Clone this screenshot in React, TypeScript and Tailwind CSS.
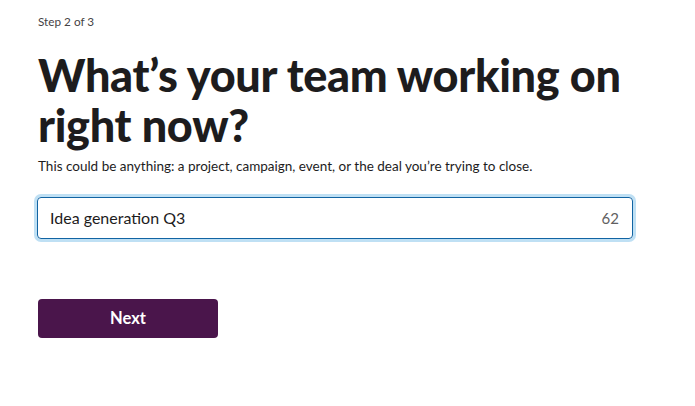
export default function App() {
  return (
    <div className="min-h-[406px] bg-white px-[38px] pt-[14px] text-[#1d1c1d]" style={{ fontFamily: "Lato, 'Noto Sans', sans-serif" }}>
      <div className="text-[11.75px] leading-[15px] text-[#454245]">Step 2 of 3</div>
      <h1 className="mt-[21px] w-[600px] text-[45px] font-black leading-[50px] tracking-[-0.3px]">What’s your team working on right now?</h1>
      <p className="mt-[7px] text-[13.5px] leading-[18px]">This could be anything: a project, campaign, event, or the deal you’re trying to close.</p>
      <div className="mt-[22px] -ml-px flex h-[42px] w-[596px] items-center justify-between rounded-[4px] border border-[#1264a3] pl-[12px] pr-[13px] text-[16px] shadow-[0_0_0_3px_#bfe0f4]">
        <span>Idea generation Q3</span>
        <span className="text-[15px] text-[#616061]">62</span>
      </div>
      <button className="mt-[60px] flex h-[39px] w-[180px] items-center justify-center rounded-[4px] bg-[#4a154b] text-[16.5px] font-bold text-white">Next</button>
    </div>
  );
}
